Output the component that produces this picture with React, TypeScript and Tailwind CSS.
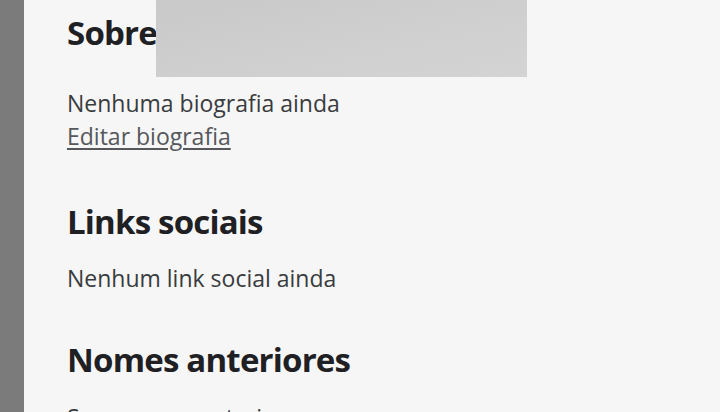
export default function App() {
  return (
    <div className="flex h-[412px] w-[720px] overflow-hidden bg-[#f6f6f6] font-['Open_Sans',sans-serif]">
      <div className="w-[24px] shrink-0 bg-[#7b7b7b]" />
      <div className="relative flex-1 pl-[43px]">
        {/* redacted block */}
        <div className="absolute left-[132px] top-0 h-[77px] w-[371px] bg-gradient-to-br from-[#c9c9c9] to-[#d4d4d4]" />

        <h2 className="mt-[13px] text-[33px] font-bold leading-[40px] tracking-[-0.8px] text-[#1f2023]">Sobre</h2>
        <div className="mt-[34px] text-[23px] leading-[33px] text-[#393b3d]">
          <p>Nenhuma biografia ainda</p>
          <a className="text-[#55575a] underline underline-offset-[3px]">Editar biografia</a>
        </div>

        <h2 className="mt-[49px] text-[33px] font-bold leading-[40px] tracking-[-0.8px] text-[#1f2023]">Links sociais</h2>
        <p className="mt-[20px] text-[23px] leading-[33px] text-[#393b3d]">Nenhum link social ainda</p>

        <h2 className="mt-[45px] text-[33px] font-bold leading-[40px] tracking-[-0.8px] text-[#1f2023]">Nomes anteriores</h2>
        <p className="mt-[21px] text-[23px] leading-[33px] text-[#393b3d]">Sem nomes anteriores</p>
      </div>
    </div>
  );
}
